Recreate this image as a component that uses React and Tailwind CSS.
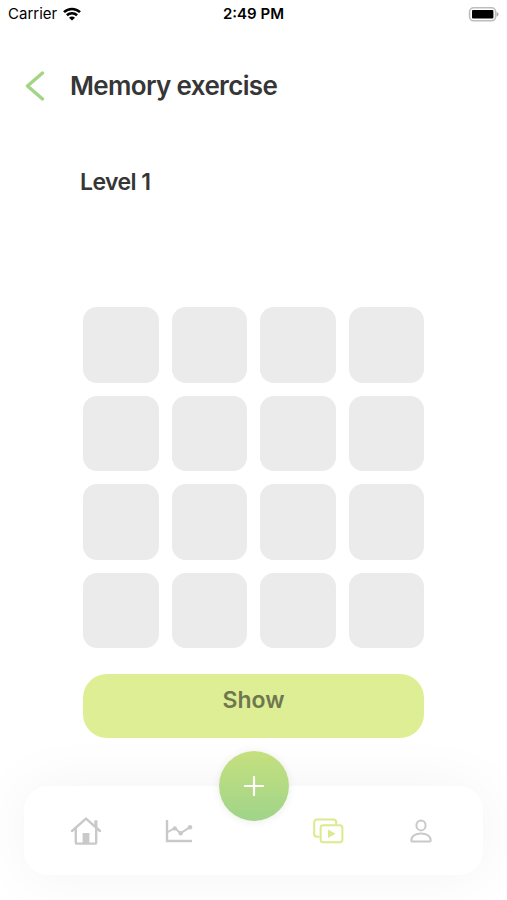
const tiles = Array.from({ length: 16 }, (_, i) => i + 1);

function WifiIcon() {
  return (
    <svg viewBox="0 0 18 14" className="h-[14px] w-[18px]" fill="none" stroke="#000" strokeWidth="2.6" aria-hidden="true">
      <path d="M1 5.1C5.4.9 12.6.9 17 5.1" />
      <path d="M3.9 8.3c2.9-2.7 7.3-2.7 10.2 0" />
      <path d="M9 13.6 6 10.7c1.7-1.5 4.3-1.5 6 0z" fill="#000" stroke="none" />
    </svg>
  );
}

function BatteryIcon() {
  return (
    <svg viewBox="0 0 31 15" className="h-[15px] w-[31px]" fill="none" aria-hidden="true">
      <rect x="1.6" y="0.8" width="26" height="13" rx="4" stroke="#bdbdbd" strokeWidth="1.6" />
      <rect x="4" y="3" width="21.4" height="8.600" rx="1" fill="#000" />
      <path d="M28.6 5c2.6.9 2.600 3.700 0 4.600z" fill="#a8a8a8" />
    </svg>
  );
}

function HomeIcon() {
  return (
    <svg viewBox="0 0 32 30" className="h-[30px] w-8" fill="none" stroke="#c9c9c9" strokeWidth="2.4" strokeLinecap="round" strokeLinejoin="round" aria-hidden="true">
      <path d="M2 15 16 2.600 30 15" />
      <path d="M5.8 13v13.200c0 .9.5 1.400 1.400 1.400h17.600c.9 0 1.400-.5 1.400-1.400V13" />
      <path d="M25 5h1.800v5.800L25 9.200z" fill="#c9c9c9" strokeWidth="1.4" />
      <path d="M12.600 17h6.800v10.400h-6.800z" fill="#c9c9c9" stroke="none" />
    </svg>
  );
}

function ChartIcon() {
  return (
    <svg viewBox="0 0 28 24" className="h-6 w-7" fill="none" stroke="#c9c9c9" strokeWidth="2" aria-hidden="true">
      <path d="M2 1v21h25" strokeWidth="2.4" />
      <path d="M2 13.5 9.8 9l5.700 5.300L25 8.200" />
      <circle cx="9.8" cy="9.4" r="2.2" fill="#c9c9c9" stroke="none" />
      <circle cx="15.7" cy="14.2" r="2.2" fill="#c9c9c9" stroke="none" />
      <circle cx="25" cy="8.2" r="2.3" fill="#c9c9c9" stroke="none" />
    </svg>
  );
}

function ExercisesIcon() {
  return (
    <svg viewBox="0 0 32 26" className="h-[26px] w-8" fill="none" stroke="#dcea8d" strokeWidth="2" strokeLinejoin="round" aria-hidden="true">
      <path d="M7.5 18.8H5a2.8 2.8 0 0 1-2.8-2.8V4.2A2.8 2.8 0 0 1 5 1.4h16.4a2.8 2.8 0 0 1 2.8 2.8v2.600" />
      <rect x="8.6" y="7.2" width="21.8" height="17" rx="2.6" />
      <path d="M16 11.4v8.600l7.600-4.300z" fill="#dcea8d" stroke="none" />
    </svg>
  );
}

function ProfileIcon() {
  return (
    <svg viewBox="0 0 22 24" className="h-6 w-[22px]" fill="none" stroke="#c9c9c9" strokeWidth="2" strokeLinejoin="round" aria-hidden="true">
      <ellipse cx="11" cy="6.4" rx="4.6" ry="5" />
      <path d="M1.3 21.4c0-4.400 4.300-7 9.700-7s9.700 2.600 9.700 7c0 .7-.4 1-1 1H2.300c-.6 0-1-.3-1-1z" />
    </svg>
  );
}

function NavLink({ label, current, children }) {
  return (
    <a href="#" aria-label={label} aria-current={current ? "page" : undefined} className="flex h-full flex-1 items-center justify-center">
      {children}
    </a>
  );
}

export default function App() {
  return (
    <div className="flex min-h-screen flex-col bg-white font-['Inter','Liberation_Sans',sans-serif] text-[#363636]">
      <div className="grid h-7 grid-cols-3 items-center px-2 text-[15px] text-black">
        <div className="flex items-center gap-1.5">
          <span>Carrier</span>
          <WifiIcon />
        </div>
        <span className="text-center font-semibold">2:49 PM</span>
        <div className="flex justify-end">
          <BatteryIcon />
        </div>
      </div>

      <header className="mt-10 flex h-9 items-center gap-6 px-6">
        <button type="button" aria-label="Back">
          <svg viewBox="0 0 22 30" className="h-[30px] w-[22px]" fill="none" stroke="#a3d585" strokeWidth="3.4" strokeLinecap="round" strokeLinejoin="round" aria-hidden="true">
            <path d="M18.500 2 3.500 15l15 13" />
          </svg>
        </button>
        <h1 className="text-[26px] leading-9 font-semibold tracking-tight">Memory exercise</h1>
      </header>

      <main className="px-20">
        <h2 className="mt-[62px] text-[23px] leading-8 font-semibold tracking-tight">Level 1</h2>
        <div className="mx-[3px] mt-[109px] grid grid-cols-4 gap-[13px]">
          {tiles.map((n) => (
            <button key={n} type="button" aria-label={`Tile ${n}`} className="aspect-square rounded-[14px] bg-[#ebebeb]" />
          ))}
        </div>
        <div className="mx-[3px] mt-[26px] flex">
          <button type="button" className="h-16 flex-1 rounded-3xl bg-[#deee94] pb-3 text-[23px] leading-8 font-semibold text-[#6f774f]">
            Show
          </button>
        </div>
      </main>

      <nav aria-label="Main" className="relative mx-6 mt-12 flex h-[89px] items-center rounded-3xl bg-white px-4 shadow-[0_0_60px_rgba(0,0,0,0.05)]">
        <NavLink label="Home"><HomeIcon /></NavLink>
        <NavLink label="Statistics"><ChartIcon /></NavLink>
        <div className="w-14" />
        <NavLink label="Exercises" current><ExercisesIcon /></NavLink>
        <NavLink label="Profile"><ProfileIcon /></NavLink>
        <div className="absolute inset-x-0 -top-[35px] flex justify-center">
          <button type="button" aria-label="Add" className="flex size-[70px] items-center justify-center rounded-full bg-linear-to-b from-[#c6e07e] to-[#9fd489] shadow-[0_1px_8px_rgba(0,0,0,0.08)]">
            <svg viewBox="0 0 20 20" className="size-5" stroke="#fff" strokeWidth="2.2" strokeLinecap="round" aria-hidden="true">
              <path d="M10 1v18M1 10h18" />
            </svg>
          </button>
        </div>
      </nav>
    </div>
  );
}
